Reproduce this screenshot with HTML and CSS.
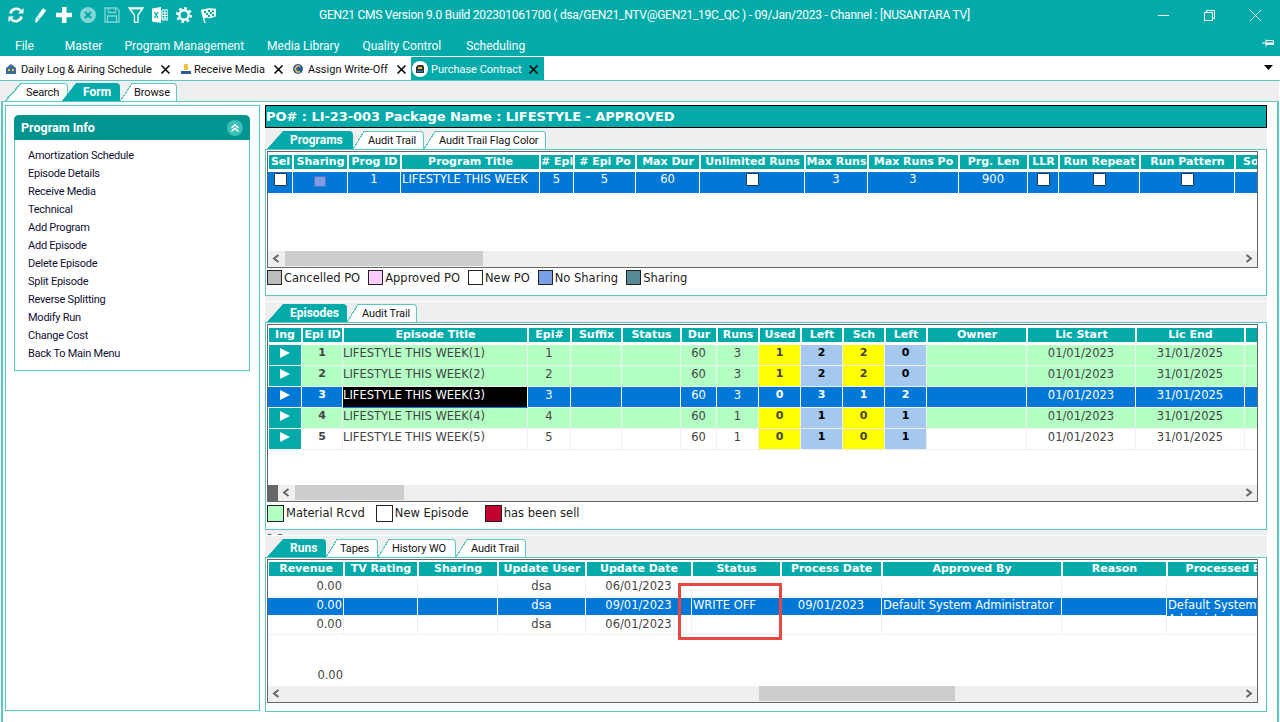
FILE: index.html
```html
<!DOCTYPE html>
<html lang="en">
<head>
    <meta charset="UTF-8">
    <title>GEN21 CMS</title>
    <link rel="stylesheet" href="styles.css">
</head>
<body>
    <header class="titlebar">
        <div class="toolbar">
            <svg viewBox="0 0 16 16"><path d="M2.500 6.500A6 6 0 0 1 12.500 3.500M13.500 9.500A6 6 0 0 1 3.500 12.500" fill="none" stroke="#fff" stroke-width="2.600"/><path d="M10 6.500h5.500V1zM6 9.500H.5V15z" fill="#fff"/></svg>
            <svg viewBox="0 0 16 16"><path d="M11 1.500l3 2-7.500 9.500-2.500 2.500-.5-.5.5-3.500zM4.800 15l-1.300-.8" fill="#fff" stroke="#fff" stroke-width=".6"/><path d="M5.500 10.500l1.800 1.300" stroke="#02aba9"/></svg>
            <svg viewBox="0 0 16 16"><path d="M6 0h4.500v5.800H16v4.400h-5.500V16H6v-5.800H0V5.800h6z" fill="#fff"/></svg>
            <svg class="dim" viewBox="0 0 16 16"><circle cx="8" cy="8" r="8" fill="#fff"/><path d="M5 5l6 6M11 5l-6 6" stroke="#02aba9" stroke-width="2.400"/></svg>
            <svg class="dim" viewBox="0 0 16 16"><path d="M1 1h11.500L15 3.500V15H1zM4.500 1v4.500h7V1M3.500 15V9h9v6" fill="none" stroke="#fff" stroke-width="1.300"/></svg>
            <svg viewBox="0 0 16 16"><path d="M1 1h14l-5 7v7.500H6.500V8z" fill="none" stroke="#fff" stroke-width="1.300"/><path d="M1 1h14v1.500H1z" fill="#fff"/></svg>
            <svg viewBox="0 0 16 16"><path d="M0 1.500L9 0v16L0 14.500z" fill="#fff"/><path d="M2.500 5l3.500 6M6 5l-3.500 6" stroke="#02aba9" stroke-width="1.300"/><path d="M10 3h6v10h-6zM10 6h6M10 8.500h6M10 11h6M13 3v10" fill="none" stroke="#fff"/></svg>
            <svg viewBox="0 0 16 16"><circle cx="8" cy="8" r="4.700" fill="none" stroke="#fff" stroke-width="2.400"/><circle cx="8" cy="8" r="6.900" fill="none" stroke="#fff" stroke-width="2.200" stroke-dasharray="2.700 2.720"/></svg>
            <svg viewBox="0 0 16 16"><path d="M1 3l8-1.500L16 2v7l-6 2-4-.5-2 .8L5.500 16 4.500 16z" fill="#fff" stroke="#fff" stroke-width=".5"/><path d="M4 4h2v2H4zM8 3h2v2H8zM12 3.500h2v2h-2zM6 6h2v2H6zM10 5h2v2h-2zM12 7h2v2h-2zM8 8h2v2H8z" fill="#02aba9"/></svg>
        </div>
        <div class="app-title">GEN21 CMS Version 9.0 Build 202301061700 ( dsa/GEN21_NTV@GEN21_19C_QC ) - 09/Jan/2023 - Channel : [NUSANTARA TV]</div>
        <div class="winctl">
            <svg class="w-min" viewBox="0 0 11 11"><path d="M0 5.500h11" stroke="#fff"/></svg>
            <svg class="w-max" viewBox="0 0 11 11"><path d="M.5 2.500h8v8h-8zM2.500 2.500v-2h8v8h-2" fill="none" stroke="#fff"/></svg>
            <svg class="w-close" viewBox="0 0 11 11"><path d="M0 0l11 11M11 0L0 11" stroke="#d6f2f1"/></svg>
        </div>
    </header>

    <nav class="menubar">
        <span class="m-file">File</span>
        <span class="m-master">Master</span>
        <span>Program Management</span>
        <span>Media Library</span>
        <span>Quality Control</span>
        <span class="m-sched">Scheduling</span>
        <svg class="pin" viewBox="0 0 12 8"><path d="M0 4h4M4 .5v7M4 1.500h7.500v4H4" fill="none" stroke="#fff"/><path d="M4 4.500h7.500" stroke="#fff" stroke-width="2"/></svg>
    </nav>

    <div class="doctabs">
        <div class="doctab dt1">
            <svg viewBox="0 0 12 12"><path d="M1 5l5-4 5 4v6H1z" fill="#3c6c9c"/><path d="M3 6h2v2H3zM7 6h2v2H7z" fill="#f0c040"/></svg>
            <span>Daily Log &amp; Airing Schedule</span>
            <svg class="x" viewBox="0 0 9 9"><path d="M.5.500l8 8M8.500.500l-8 8" stroke="#000" stroke-width="1.500"/></svg>
        </div>
        <div class="doctab dt2">
            <svg viewBox="0 0 12 12"><path d="M4 1h4v6H4z" fill="#f0c040"/><path d="M1 8h10v3H1z" fill="#2c5c9c"/></svg>
            <span>Receive Media</span>
            <svg class="x" viewBox="0 0 9 9"><path d="M.5.500l8 8M8.500.500l-8 8" stroke="#000" stroke-width="1.500"/></svg>
        </div>
        <div class="doctab dt3">
            <svg viewBox="0 0 12 12"><circle cx="6" cy="6" r="5" fill="#2c5c9c"/><path d="M8 3H5L3 6l2 3h3" fill="none" stroke="#f0c040" stroke-width="1.500"/></svg>
            <span>Assign Write-Off</span>
            <svg class="x" viewBox="0 0 9 9"><path d="M.5.500l8 8M8.500.500l-8 8" stroke="#000" stroke-width="1.500"/></svg>
        </div>
        <div class="doctab dt-active">
            <svg class="ring" viewBox="0 0 16 16"><circle cx="8" cy="8" r="8" fill="#fff"/><path d="M4 12V6l2-2h5l1 2v6z" fill="#333"/><path d="M6 6h4v2H6z" fill="#f0c040"/><path d="M5 9.500h6V11H5z" fill="#2c7cc0"/></svg>
            <span>Purchase Contract</span>
            <svg class="x" viewBox="0 0 9 9"><path d="M.5.500l8 8M8.500.500l-8 8" stroke="#000" stroke-width="1.500"/></svg>
        </div>
        <svg class="tabmenu" viewBox="0 0 9 5"><path d="M0 0h9L4.500 5z" fill="#000"/></svg>
    </div>

    <main class="workspace">
        <div class="tabrow formtabs">
            <div class="tab first t-search">Search</div>
            <div class="tab active t-form">Form</div>
            <div class="tab t-browse">Browse</div>
        </div>
        <div class="split">
            <aside class="leftpane">
                <div class="infobox">
                    <div class="infohead">
                        <span>Program Info</span>
                        <svg viewBox="0 0 16 16"><circle cx="8" cy="8" r="8" fill="#3cbfb8"/><path d="M4.500 8L8 4.800 11.500 8M4.500 11.500L8 8.300l3.500 3.200" fill="none" stroke="#fff" stroke-width="1.500"/></svg>
                    </div>
                    <ul class="infolist">
                        <li>Amortization Schedule</li>
                        <li>Episode Details</li>
                        <li>Receive Media</li>
                        <li>Technical</li>
                        <li>Add Program</li>
                        <li>Add Episode</li>
                        <li>Delete Episode</li>
                        <li>Split Episode</li>
                        <li>Reverse Splitting</li>
                        <li>Modify Run</li>
                        <li>Change Cost</li>
                        <li>Back To Main Menu</li>
                    </ul>
                </div>
            </aside>

            <section class="rightpane">
                <h1 class="pobar">PO# : LI-23-003 Package Name : LIFESTYLE - APPROVED</h1>

                <div class="tabrow tr-programs">
                    <div class="tab first active pt1">Programs</div>
                    <div class="tab pt2">Audit Trail</div>
                    <div class="tab pt3">Audit Trail Flag Color</div>
                </div>
                <div class="panel panel-programs">
                    <div class="grid prog">
                        <div class="gridbody">
                            <div class="row head">
                                <div>Sel</div><div>Sharing</div><div>Prog ID</div><div>Program Title</div><div># Epi</div><div># Epi Po</div><div>Max Dur</div><div>Unlimited Runs</div><div>Max Runs</div><div>Max Runs Po</div><div>Prg. Len</div><div>LLR</div><div>Run Repeat</div><div>Run Pattern</div><div class="cut">So</div>
                            </div>
                            <div class="row sel tall">
                                <div class="c"><i class="check"></i></div><div class="c"><i class="share"></i></div><div class="c">1</div><div class="c l">LIFESTYLE THIS WEEK</div><div class="c">5</div><div class="c">5</div><div class="c">60</div><div class="c"><i class="check"></i></div><div class="c">3</div><div class="c">3</div><div class="c">900</div><div class="c"><i class="check"></i></div><div class="c"><i class="check"></i></div><div class="c"><i class="check"></i></div><div class="c"></div>
                            </div>
                        </div>
                        <div class="hscroll">
                            <svg class="arrow" viewBox="0 0 17 15"><path d="M10.500 4L6 7.500l4.500 3.500" fill="none" stroke="#666" stroke-width="2"/></svg>
                            <div class="thumb th-prog"></div>
                            <svg class="arrow end" viewBox="0 0 17 15"><path d="M6.500 4L11 7.500 6.500 11" fill="none" stroke="#666" stroke-width="2"/></svg>
                        </div>
                    </div>
                    <div class="legend">
                        <i class="sw grey"></i><span class="lg-a">Cancelled PO</span>
                        <i class="sw pink"></i><span class="lg-b">Approved PO</span>
                        <i class="sw"></i><span class="lg-c">New PO</span>
                        <i class="sw blue"></i><span class="lg-d">No Sharing</span>
                        <i class="sw slate"></i><span>Sharing</span>
                    </div>
                </div>

                <div class="gapstrip"></div>
                <div class="whiteline"></div>

                <div class="tabrow tr-episodes">
                    <div class="tab first active et1">Episodes</div>
                    <div class="tab et2">Audit Trail</div>
                </div>
                <div class="panel panel-episodes">
                    <div class="grid epis">
                        <div class="gridbody">
                            <div class="row head">
                                <div>Ing</div><div>Epi ID</div><div>Episode Title</div><div>Epi#</div><div>Suffix</div><div>Status</div><div>Dur</div><div>Runs</div><div>Used</div><div>Left</div><div>Sch</div><div>Left</div><div>Owner</div><div>Lic Start</div><div>Lic End</div><div></div>
                            </div>
                            <div class="row green">
                                <div class="c ing"><b></b></div><div class="c bold">1</div><div class="c l">LIFESTYLE THIS WEEK(1)</div><div class="c">1</div><div class="c"></div><div class="c"></div><div class="c">60</div><div class="c">3</div><div class="c bold yel">1</div><div class="c bold sky">2</div><div class="c bold yel">2</div><div class="c bold sky">0</div><div class="c"></div><div class="c">01/01/2023</div><div class="c">31/01/2025</div><div class="c"></div>
                            </div>
                            <div class="row green">
                                <div class="c ing"><b></b></div><div class="c bold">2</div><div class="c l">LIFESTYLE THIS WEEK(2)</div><div class="c">2</div><div class="c"></div><div class="c"></div><div class="c">60</div><div class="c">3</div><div class="c bold yel">1</div><div class="c bold sky">2</div><div class="c bold yel">2</div><div class="c bold sky">0</div><div class="c"></div><div class="c">01/01/2023</div><div class="c">31/01/2025</div><div class="c"></div>
                            </div>
                            <div class="row sel">
                                <div class="c ing-sel"><b></b></div><div class="c bold">3</div><div class="c l current">LIFESTYLE THIS WEEK(3)</div><div class="c">3</div><div class="c"></div><div class="c"></div><div class="c">60</div><div class="c">3</div><div class="c bold">0</div><div class="c bold">3</div><div class="c bold">1</div><div class="c bold">2</div><div class="c"></div><div class="c">01/01/2023</div><div class="c">31/01/2025</div><div class="c"></div>
                            </div>
                            <div class="row green">
                                <div class="c ing"><b></b></div><div class="c bold">4</div><div class="c l">LIFESTYLE THIS WEEK(4)</div><div class="c">4</div><div class="c"></div><div class="c"></div><div class="c">60</div><div class="c">1</div><div class="c bold yel">0</div><div class="c bold sky">1</div><div class="c bold yel">0</div><div class="c bold sky">1</div><div class="c"></div><div class="c">01/01/2023</div><div class="c">31/01/2025</div><div class="c"></div>
                            </div>
                            <div class="row">
                                <div class="c ing"><b></b></div><div class="c bold">5</div><div class="c l">LIFESTYLE THIS WEEK(5)</div><div class="c">5</div><div class="c"></div><div class="c"></div><div class="c">60</div><div class="c">1</div><div class="c bold yel">0</div><div class="c bold sky">1</div><div class="c bold yel">0</div><div class="c bold sky">1</div><div class="c"></div><div class="c">01/01/2023</div><div class="c">31/01/2025</div><div class="c"></div>
                            </div>
                        </div>
                        <div class="hscroll">
                            <div class="corner"></div>
                            <svg class="arrow" viewBox="0 0 17 15"><path d="M10.500 4L6 7.500l4.500 3.500" fill="none" stroke="#666" stroke-width="2"/></svg>
                            <div class="thumb th-epis"></div>
                            <svg class="arrow end" viewBox="0 0 17 15"><path d="M6.500 4L11 7.500 6.500 11" fill="none" stroke="#666" stroke-width="2"/></svg>
                        </div>
                    </div>
                    <div class="legend big">
                        <i class="sw mint"></i><span class="lg-e">Material Rcvd</span>
                        <i class="sw"></i><span class="lg-f">New Episode</span>
                        <i class="sw crimson"></i><span>has been sell</span>
                    </div>
                </div>

                <div class="gapstrip clipnum">0.0</div>
                <div class="whiteline"></div>

                <div class="tabrow tr-runs">
                    <div class="tab first active rt1">Runs</div>
                    <div class="tab rt2">Tapes</div>
                    <div class="tab rt3">History WO</div>
                    <div class="tab rt4">Audit Trail</div>
                </div>
                <div class="panel panel-runs">
                    <div class="grid runs">
                        <div class="gridbody">
                            <div class="row head">
                                <div>Revenue</div><div>TV Rating</div><div>Sharing</div><div>Update User</div><div>Update Date</div><div>Status</div><div>Process Date</div><div>Approved By</div><div>Reason</div><div>Processed By</div>
                            </div>
                            <div class="row">
                                <div class="c r">0.00</div><div class="c"></div><div class="c"></div><div class="c">dsa</div><div class="c">06/01/2023</div><div class="c"></div><div class="c"></div><div class="c"></div><div class="c"></div><div class="c"></div>
                            </div>
                            <div class="row sel">
                                <div class="c r">0.00</div><div class="c"></div><div class="c"></div><div class="c">dsa</div><div class="c">09/01/2023</div><div class="c l">WRITE OFF</div><div class="c">09/01/2023</div><div class="c l">Default System Administrator</div><div class="c"></div><div class="c l wrap">Default System Administrator</div>
                            </div>
                            <div class="row lined">
                                <div class="c r">0.00</div><div class="c"></div><div class="c"></div><div class="c">dsa</div><div class="c">06/01/2023</div><div class="c"></div><div class="c"></div><div class="c"></div><div class="c"></div><div class="c"></div>
                            </div>
                            <div class="row total">
                                <div class="c r">0.00</div>
                            </div>
                        </div>
                        <div class="hscroll">
                            <svg class="arrow" viewBox="0 0 17 15"><path d="M10.500 4L6 7.500l4.500 3.500" fill="none" stroke="#666" stroke-width="2"/></svg>
                            <div class="thumb th-runs"></div>
                            <svg class="arrow end" viewBox="0 0 17 15"><path d="M6.500 4L11 7.500 6.500 11" fill="none" stroke="#666" stroke-width="2"/></svg>
                        </div>
                        <div class="redbox"></div>
                    </div>
                </div>
            </section>
        </div>
    </main>
</body>
</html>
```
FILE: styles.css
```css
* {
    box-sizing: border-box;
}
html, body {
    margin: 0;
    height: 722px;
    overflow: hidden;
    background: #fff;
}
body {
    display: flex;
    flex-direction: column;
    font-family: Roboto, sans-serif;
    font-size: 11px;
    color: #111;
}

/* title bar */
.titlebar {
    height: 28px;
    background: #02aba9;
    display: flex;
    align-items: center;
    position: relative;
    color: #fff;
    font-size: 12px;
}
.toolbar {
    display: flex;
    gap: 8px;
    padding: 2px 0 0 8px;
}
.toolbar svg {
    width: 16px;
    height: 16px;
}
.toolbar .dim {
    opacity: 0.5;
}
.app-title {
    margin-left: 103px;
    padding-top: 2px;
    letter-spacing: -0.26px;
    white-space: nowrap;
}
.winctl {
    margin-left: auto;
    display: flex;
    padding: 2px 19px 0 0;
    gap: 35px;
}
.winctl svg {
    width: 11px;
    height: 11px;
}

/* menu */
.menubar {
    height: 28px;
    background: #02aba9;
    color: #fff;
    font-size: 12px;
    display: flex;
    align-items: center;
    gap: 23px;
    padding: 7px 6px 0 15px;
}
.menubar .m-file {
    margin-right: 8px;
}
.menubar .m-master {
    margin-right: -1px;
}
.menubar .m-sched {
    margin-left: 2px;
}
.menubar .pin {
    width: 12px;
    height: 8px;
    margin-left: auto;
    margin-top: -5px;
}

/* open documents */
.doctabs {
    height: 24px;
    padding-top: 1px;
    display: flex;
    align-items: stretch;
    position: relative;
}
.doctab {
    display: flex;
    align-items: center;
    white-space: nowrap;
    padding-top: 1px;
}
.doctab svg {
    width: 12px;
    height: 12px;
    flex: none;
}
.doctab svg.x {
    width: 9px;
    height: 9px;
}
.dt1 {
    padding-left: 5px;
    width: 180px;
}
.dt1 span {
    width: 140px;
    margin-left: 4px;
    letter-spacing: -0.1px;
}
.dt2 {
    width: 112px;
}
.dt2 span {
    width: 80px;
    margin-left: 2px;
}
.dt3 {
    width: 119px;
}
.dt3 span {
    width: 89px;
    margin-left: 4px;
}
.doctab.dt-active {
    background: #02aba9;
    color: #fff;
    width: 133px;
    padding-left: 1px;
}
.doctab svg.ring {
    width: 16px;
    height: 16px;
}
.dt-active span {
    width: 98px;
    margin-left: 3px;
}
.tabmenu {
    width: 9px;
    height: 5px;
    margin: 8px 7px 0 auto;
}

/* workspace */
.workspace {
    flex: 1;
    display: flex;
    flex-direction: column;
    border-top: 1px solid #5cc8c2;
    min-height: 0;
}
.split {
    flex: 1;
    display: flex;
    gap: 5px;
    padding: 3px 0 10px 2px;
    margin: 0 1px;
    border-left: 2px solid #5cc8c2;
    border-right: 2px solid #5cc8c2;
    border-top: 1px solid #5cc8c2;
    min-height: 0;
}

/* slanted tabs */
.tabrow {
    background: #efefef;
    display: flex;
    align-items: flex-end;
    flex: none;
}
.tab {
    position: relative;
    height: 18px;
    line-height: 17px;
    margin-left: 11px;
    background: #fff;
    border-top: 1px solid #5cc8c2;
    border-right: 1px solid #5cc8c2;
    border-radius: 0 4px 0 0;
    letter-spacing: -0.1px;
    white-space: nowrap;
}
.tab::before {
    content: '';
    position: absolute;
    left: -11px;
    top: -1px;
    bottom: 0;
    width: 11px;
    background: linear-gradient(to bottom right, transparent 48%, #5cc8c2 48%, #5cc8c2 54%, #fff 54%);
}
.tab.first {
    margin-left: 16px;
}
.tab.first::before {
    left: -16px;
    width: 16px;
}
.tab.active {
    background: #02aba9;
    border-color: #02aba9;
    color: #fff;
    font-size: 12px;
    font-weight: bold;
    letter-spacing: 0;
    z-index: 1;
}
.tab.active::before {
    background: linear-gradient(to bottom right, transparent 49%, #02aba9 51%);
}

.formtabs {
    height: 20px;
    padding-left: 5px;
    margin-right: 1px;
}
.t-search { width: 47px; padding-left: 5px; }
.tab.t-form { width: 44px; margin-left: 8px; padding-left: 7px; }
.tab.t-form::before { left: -14px; width: 14px; }
.t-browse { width: 45px; padding-left: 2px; margin-left: 12px; }
.t-browse::before { left: -12px; width: 12px; }

/* left pane */
.leftpane {
    width: 255px;
    height: 606px;
    border: 1px solid #5cc8c2;
    padding: 9px 8px;
    flex: none;
}
.infobox {
    width: 236px;
    height: 256px;
    border: 1px solid #5cc8c2;
    border-top: none;
    border-radius: 5px 5px 0 0;
}
.infohead {
    height: 25px;
    margin: 0 -1px;
    background: #00968f;
    border-radius: 5px 5px 0 0;
    color: #fff;
    font-size: 12.5px;
    font-weight: bold;
    display: flex;
    align-items: center;
    justify-content: space-between;
    padding: 0 7px;
}
.infohead svg {
    width: 16px;
    height: 16px;
}
.infolist {
    list-style: none;
    margin: 7px 0 0;
    padding: 0 0 0 13px;
}
.infolist li {
    height: 18px;
    line-height: 17px;
    letter-spacing: -0.25px;
    overflow: hidden;
    color: #111133;
}

/* right pane */
.rightpane {
    width: 1002px;
    display: flex;
    flex-direction: column;
    flex: none;
}
.pobar {
    margin: 0;
    height: 23px;
    flex: none;
    background: #02aba9;
    border: 1px solid #000;
    color: #fff;
    font-family: "DejaVu Sans", sans-serif;
    font-size: 13px;
    line-height: 21px;
    letter-spacing: -0.05px;
    white-space: nowrap;
}
.tr-programs { height: 21px; padding-left: 2px; }
.tr-episodes { height: 20px; padding-left: 2px; }
.tr-runs { height: 21px; padding-left: 2px; }
.tab.pt1 { width: 70px; padding-left: 7px; }
.tab.pt2 { width: 60px; padding-left: 4px; }
.tab.pt3 { width: 111px; padding-left: 4px; }
.tab.et1 { width: 64px; padding-left: 7px; }
.tab.et2 { width: 59px; padding-left: 4px; }
.tab.rt1 { width: 43px; padding-left: 7px; }
.tab.rt2 { width: 41px; padding-left: 3px; }
.tab.rt3 { width: 67px; padding-left: 3px; }
.tab.rt4 { width: 59px; padding-left: 4px; }

.panel {
    border: 1px solid #5cc8c2;
    padding: 1px;
    flex: none;
    background: #fff;
}
.panel-programs { height: 147px; }
.panel-episodes { height: 208px; }
.panel-runs { height: 155px; }
.gapstrip {
    height: 5px;
    background: #efefef;
    flex: none;
    overflow: hidden;
    font-family: "DejaVu Sans", sans-serif;
    font-size: 11px;
    line-height: 11px;
    color: #333;
}
.clipnum {
    padding: 3px 0 0 1px;
}
.whiteline {
    height: 1px;
    background: #fff;
    flex: none;
}

/* data grids */
.grid {
    position: relative;
    width: 991px;
    border: 1px solid #666;
    display: flex;
    flex-direction: column;
    overflow: hidden;
    font-family: "DejaVu Sans", sans-serif;
    font-size: 11.5px;
    color: #444;
}
.prog { height: 117px; }
.epis { height: 178px; }
.runs { height: 144px; }
.gridbody {
    flex: 1;
    min-height: 0;
    overflow: hidden;
}
.row {
    display: grid;
    height: 21px;
    white-space: nowrap;
}
.prog .row {
    grid-template-columns: 25px 55px 53px 139px 34px 62px 64px 105px 63px 91px 69px 31px 81px 95px 60px;
}
.epis .row {
    grid-template-columns: 34px 41px 185px 43px 51px 59px 36px 42px 42px 42px 42px 42px 100px 109px 109px 40px;
}
.runs .row {
    grid-template-columns: 76px 74px 80px 88px 106px 89px 101px 180px 105px 120px;
    height: 19px;
}
.row.head,
.runs .row.head {
    height: 20px;
    color: #fff;
    font-size: 11px;
    font-weight: bold;
    text-align: center;
}
.runs .row.head {
    height: 18px;
}
.head > div {
    margin: 3px 1px;
    background: #02aba9;
    line-height: 13px;
    overflow: hidden;
}
.runs .head > div {
    margin: 2px 1px;
}
.head > .cut {
    text-align: left;
    padding-left: 7px;
}
.c {
    text-align: center;
    line-height: 16px;
    border-right: 1px solid #efefef;
    border-bottom: 1px solid #efefef;
    overflow: hidden;
}
.c.l {
    text-align: left;
    padding-left: 1px;
}
.epis .c.l {
    padding-left: 0;
}
.c.r {
    text-align: right;
    padding-right: 1px;
}
.c.bold {
    font-size: 11px;
    font-weight: bold;
}
.prog .row.tall {
    height: 22px;
}
.prog .row.tall .c {
    line-height: 14px;
}
.row.green .c {
    background: #b3ffc4;
}
.row .c.yel {
    background: #ff0;
    border-color: #efefef;
}
.row .c.sky {
    background: #a5c8ef;
    color: #000;
}
.row.sel {
    background: #0078d7;
    color: #fff;
}
.row.sel .c {
    background: #0078d7;
    border-right-color: #fff;
    border-bottom-color: #fff;
}
.row.sel .c.current {
    background: #000;
    border-bottom-color: #0078d7;
}
.row .c.ing,
.row .c.ing-sel {
    background: #02aba9;
    border: none;
    margin: 0 1px 1px 1px;
    padding-top: 3px;
}
.row .c.ing-sel {
    background: #0078d7;
    margin: 0;
    border-right: 1px solid #fff;
    border-bottom: 1px solid #fff;
}
.c.ing b,
.c.ing-sel b {
    display: block;
    width: 0;
    height: 0;
    margin: 0 auto;
    border-left: 10px solid #fff;
    border-top: 5px solid transparent;
    border-bottom: 5px solid transparent;
}
.check {
    display: block;
    width: 13px;
    height: 13px;
    margin: 1px auto 0;
    background: #fff;
    border: 1px solid #333;
    border-radius: 1px;
}
.share {
    display: block;
    width: 12px;
    height: 11px;
    margin: 4px auto 0;
    background: #7b9fe6;
    border: 1px solid #5f6fc0;
}
.runs .row.sel {
    border-top: 1px solid #fff;
}
.runs .row.sel .c {
    line-height: 14px;
}
.runs .row.sel .c.wrap {
    white-space: normal;
    height: 18px;
    border-bottom: none;
}
.runs .row.total {
    height: 20px;
    margin-top: 32px;
}
.row.total .c {
    border: none;
}

/* scrollbars */
.hscroll {
    height: 16px;
    flex: none;
    display: flex;
    background: #efefef;
    align-items: stretch;
}
.arrow {
    width: 17px;
    height: 15px;
    flex: none;
}
.arrow.end {
    margin-left: auto;
}
.thumb {
    background: #cdcdcd;
    height: 15px;
}
.th-prog { width: 198px; }
.th-epis { width: 109px; }
.th-runs { width: 196px; margin-left: 474px; }
.corner {
    width: 10px;
    background: #666;
}

/* legends */
.legend {
    display: flex;
    align-items: center;
    height: 15px;
    margin-top: 2px;
    font-family: "DejaVu Sans", sans-serif;
    font-size: 11.5px;
    color: #222;
    white-space: nowrap;
}
.legend span {
    padding-top: 1px;
}
.legend.big {
    height: 18px;
}
.legend.big span {
    padding: 0 0 1px;
}
.sw {
    width: 15px;
    height: 15px;
    border: 1px solid #222;
    background: #fff;
    flex: none;
    margin-right: 2px;
}
.legend.big .sw {
    width: 17px;
    height: 17px;
}
.sw.grey { background: #bdbdbd; }
.sw.pink { background: #ffccff; }
.sw.blue { background: #7b9fe6; }
.sw.slate { background: #558b95; }
.sw.mint { background: #b3ffc4; }
.sw.crimson { background: #c40030; }
.lg-a, .lg-b, .lg-c, .lg-d {
    margin-right: 8px;
}
.lg-e {
    margin-right: 11px;
}
.lg-f {
    margin-right: 16px;
}

/* red highlight drawn over the grid */
.redbox {
    position: absolute;
    left: 410px;
    top: 23px;
    width: 104px;
    height: 57px;
    border: 3px solid #e8483f;
}
```
